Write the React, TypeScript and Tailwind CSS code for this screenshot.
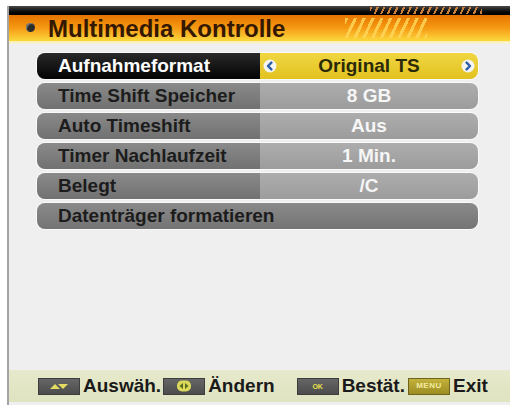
import React from 'react';

type Row = { label: string; value?: string; active?: boolean };

const rows: Row[] = [
  { label: 'Aufnahmeformat', value: 'Original TS', active: true },
  { label: 'Time Shift Speicher', value: '8 GB' },
  { label: 'Auto Timeshift', value: 'Aus' },
  { label: 'Timer Nachlaufzeit', value: '1 Min.' },
  { label: 'Belegt', value: '/C' },
  { label: 'Datenträger formatieren' },
];

const ArrowDot = ({ dir }: { dir: 'left' | 'right' }) => (
  <svg width="14" height="14" viewBox="0 0 14 14">
    <circle cx="7" cy="7" r="6.5" fill="#f4f4f0" />
    <path
      d={dir === 'left' ? 'M8.4 3.6 L5 7 L8.4 10.4' : 'M5.6 3.6 L9 7 L5.6 10.4'}
      fill="none"
      stroke="#2f5fa8"
      strokeWidth="2.4"
      strokeLinecap="round"
      strokeLinejoin="round"
    />
  </svg>
);

const MenuRow = ({ label, value, active }: Row) => {
  if (value === undefined) {
    return (
      <div className="flex h-[26px] items-center rounded-[8px] bg-gradient-to-b from-[#8a8a8a] to-[#747474] pl-[21px] text-[19px] font-bold text-[#1c1c1c] shadow-[0_0_0_1px_#fafafa]">
        {label}
      </div>
    );
  }
  return (
    <div className="flex h-[26px] overflow-hidden rounded-[8px] shadow-[0_0_0_1px_#fafafa]">
      <div
        className={
          active
            ? 'flex w-[223px] items-center bg-gradient-to-b from-[#2a2a2a] to-[#050505] pl-[21px] text-[19px] font-bold text-white'
            : 'flex w-[223px] items-center bg-gradient-to-b from-[#8a8a8a] to-[#717171] pl-[21px] text-[19px] font-bold text-[#1c1c1c]'
        }
      >
        {label}
      </div>
      <div
        className={
          active
            ? 'flex flex-1 items-center justify-between bg-gradient-to-b from-[#f0d640] to-[#e2c21e] px-[3px] text-[19px] font-bold text-[#2b2a08]'
            : 'flex flex-1 items-center justify-center bg-gradient-to-b from-[#adadad] to-[#9c9c9c] text-[19px] font-bold text-[#f6f6f6]'
        }
      >
        {active ? (
          <>
            <ArrowDot dir="left" />
            <span>{value}</span>
            <ArrowDot dir="right" />
          </>
        ) : (
          value
        )}
      </div>
    </div>
  );
};

const KeyBox = ({ children, olive }: { children: React.ReactNode; olive?: boolean }) => (
  <div
    className={
      olive
        ? 'flex h-[17px] w-[42px] items-center justify-center border border-[#6d6420] bg-gradient-to-b from-[#c4b23c] to-[#9c8c22]'
        : 'flex h-[17px] w-[42px] items-center justify-center border border-[#3d3d3d] bg-gradient-to-b from-[#666666] to-[#4c4c4c]'
    }
  >
    {children}
  </div>
);

export default function App() {
  return (
    <div className="h-[409px] w-[510px] overflow-hidden bg-white font-['Liberation_Sans',Arial,sans-serif]">
      <div className="ml-[7px] mt-[6px] flex h-[399px] w-[503px] flex-col border-l-2 border-[#a4a4a4] bg-[#efefef]">
        {/* header */}
        <div className="relative">
          <div className="h-[9px] bg-gradient-to-b from-[#4a4a4a] via-[#161616] to-[#000000]" />
          <div className="flex h-[26px] items-center bg-gradient-to-b from-[#e67400] via-[#f59a12] to-[#fbd83c] pl-[17px]">
            <span className="mb-[2px] h-[9px] w-[9px] rounded-full bg-[#2c2c2c] shadow-[inset_1px_1px_1px_#888]" />
            <span className="ml-[13px] mt-[2px] text-[24px] font-bold leading-none text-[#351800]">
              Multimedia Kontrolle
            </span>
          </div>
          <div className="h-[3px] bg-gradient-to-b from-[#fdf1a0] to-[#f3f1e4]" />
          <div className="absolute left-[361px] top-[1px] h-[7px] w-[112px] bg-[repeating-linear-gradient(115deg,#c9803a_0_2px,transparent_2px_6px)]" />
          <div className="absolute left-[336px] top-[12px] h-[20px] w-[82px] bg-[repeating-linear-gradient(115deg,#ffd85a_0_3px,transparent_3px_8px)] opacity-80" />
        </div>

        {/* menu */}
        <div className="flex flex-col gap-[4px] pl-[28px] pr-[32px] pt-[9px]">
          {rows.map((row) => (
            <MenuRow key={row.label} {...row} />
          ))}
        </div>

        <div className="flex-1" />

        {/* footer */}
        <div className="mb-[3px] flex h-[32px] items-center bg-gradient-to-b from-[#e6e9cb] to-[#dfe3c0] pl-[29px] text-[19px] font-bold text-[#1a1a1a]">
          <KeyBox>
            <svg width="20" height="8" viewBox="0 0 20 8">
              <path d="M1 7 L6 2 L11 7 Z" fill="#e4dc62" />
              <path d="M9 2 L19 2 L14 7 Z" fill="#e4dc62" />
            </svg>
          </KeyBox>
          <span className="ml-[3px]">Auswäh.</span>
          <div className="ml-[2px]">
            <KeyBox>
              <svg width="16" height="12" viewBox="0 0 16 12">
                <rect x="1" y="0.5" width="14" height="11" rx="5" fill="#dcd85a" />
                <path d="M7 3 L3.5 6 L7 9 Z" fill="#5a6a20" />
                <path d="M9 3 L12.5 6 L9 9 Z" fill="#5a6a20" />
              </svg>
            </KeyBox>
          </div>
          <span className="ml-[3px]">Ändern</span>
          <div className="ml-[22px]">
            <KeyBox>
              <span className="text-[7px] font-bold leading-none text-[#e8e04a]">OK</span>
            </KeyBox>
          </div>
          <span className="ml-[3px]">Bestät.</span>
          <div className="ml-[3px]">
            <KeyBox olive>
              <span className="text-[8px] font-bold leading-none tracking-[0.5px] text-[#f3eca0]">MENU</span>
            </KeyBox>
          </div>
          <span className="ml-[3px]">Exit</span>
        </div>
      </div>
    </div>
  );
}
